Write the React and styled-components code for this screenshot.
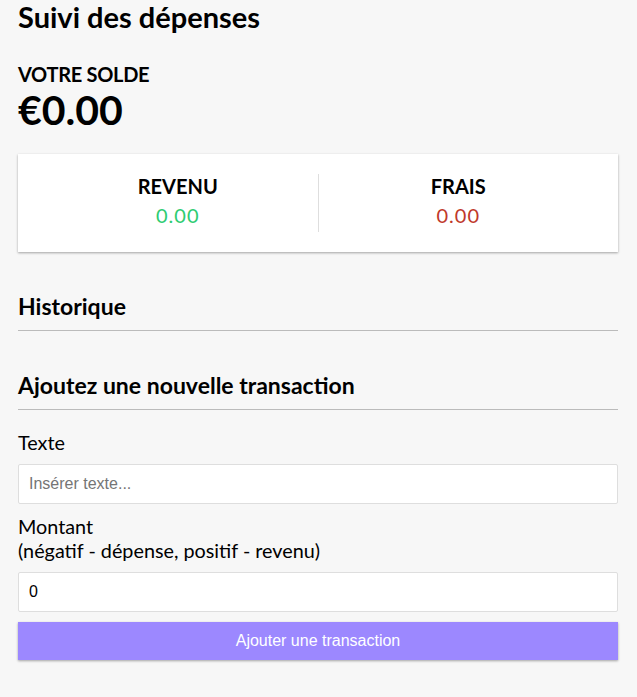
import React, { useState } from 'react'
import styled, { createGlobalStyle } from 'styled-components'

const GlobalStyle = createGlobalStyle`
  * { box-sizing: border-box; }
  body {
    margin: 0;
    background-color: #f7f7f7;
    font-family: Lato, "Open Sans", sans-serif;
    color: #000;
  }
`

const Container = styled.div`
  width: 600px;
  margin: 0 18px;
  padding-bottom: 30px;
`

const Title = styled.h2`
  font-size: 29px;
  font-weight: 700;
  margin: 0;
  line-height: 34px;
`

const BalanceLabel = styled.h4`
  margin: 28px 0 0;
  font-size: 20px;
  font-weight: 700;
  text-transform: uppercase;
  line-height: 24px;
  letter-spacing: -0.3px;
`

const Balance = styled.h1`
  margin: 0;
  font-size: 41px;
  font-weight: 700;
  line-height: 48px;
`

const Card = styled.div`
  background-color: #fff;
  box-shadow: 0 1px 3px rgba(0, 0, 0, 0.12), 0 1px 2px rgba(0, 0, 0, 0.24);
  padding: 20px;
  display: flex;
  margin: 20px 0;
`

const Side = styled.div`
  flex: 1;
  text-align: center;
  border-right: ${p => (p.divider ? '1px solid #dedede' : 'none')};
`

const SideTitle = styled.h4`
  margin: 0;
  font-size: 20px;
  font-weight: 700;
  text-transform: uppercase;
  line-height: 24px;
`

const Money = styled.p`
  margin: 4px 0;
  font-size: 20px;
  letter-spacing: 1px;
  line-height: 26px;
  color: ${p => (p.plus ? '#2ecc71' : '#c0392b')};
`

const Section = styled.h3`
  margin: 40px 0 10px;
  font-size: 23px;
  font-weight: 700;
  line-height: 28px;
  padding-bottom: 10px;
  border-bottom: 1px solid #bbb;
`

const Field = styled.div`
  display: flex;
  flex-direction: column;
`

const Label = styled.label`
  display: inline-block;
  margin: 10px 0;
  font-size: 19.8px;
  line-height: 24px;
`

const Input = styled.input`
  display: block;
  width: 100%;
  border: 1px solid #dedede;
  border-radius: 2px;
  font-family: "Liberation Sans", Arial, sans-serif;
  font-size: 16px;
  padding: 10px;
  height: 40px;
  background: #fff;
  color: #000;
  &::placeholder { color: #757575; }
`

const Button = styled.button`
  cursor: pointer;
  display: block;
  width: 100%;
  background-color: #9c88ff;
  box-shadow: 0 1px 3px rgba(0, 0, 0, 0.12), 0 1px 2px rgba(0, 0, 0, 0.24);
  color: #fff;
  border: 0;
  font-family: "Liberation Sans", Arial, sans-serif;
  font-size: 16px;
  padding: 10px;
  height: 38px;
  margin: 10px 0 30px;
`

export default function App() {
  const [text, setText] = useState('')
  const [amount, setAmount] = useState(0)

  return (
    <Container>
      <GlobalStyle />
      <Title>Suivi des dépenses</Title>
      <BalanceLabel>Votre solde</BalanceLabel>
      <Balance>€0.00</Balance>
      <Card>
        <Side divider>
          <SideTitle>Revenu</SideTitle>
          <Money plus>0.00</Money>
        </Side>
        <Side>
          <SideTitle>Frais</SideTitle>
          <Money>0.00</Money>
        </Side>
      </Card>
      <Section>Historique</Section>
      <Section>Ajoutez une nouvelle transaction</Section>
      <form onSubmit={e => e.preventDefault()}>
        <Field>
          <Label htmlFor="text">Texte</Label>
          <Input
            type="text"
            id="text"
            value={text}
            onChange={e => setText(e.target.value)}
            placeholder="Insérer texte..."
          />
        </Field>
        <Field>
          <Label htmlFor="amount">
            Montant <br />
            (négatif - dépense, positif - revenu)
          </Label>
          <Input
            type="number"
            id="amount"
            value={amount}
            onChange={e => setAmount(e.target.value)}
          />
        </Field>
        <Button>Ajouter une transaction</Button>
      </form>
    </Container>
  )
}
